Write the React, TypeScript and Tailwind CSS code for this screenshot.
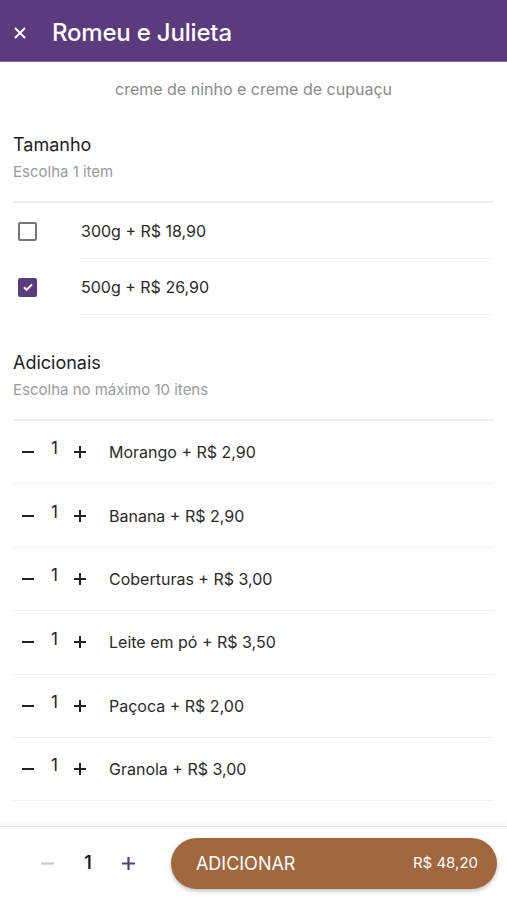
import React from "react";

const sizes = [
  { label: "300g + R$ 18,90", checked: false },
  { label: "500g + R$ 26,90", checked: true },
];

const extras = [
  "Morango + R$ 2,90",
  "Banana + R$ 2,90",
  "Coberturas + R$ 3,00",
  "Leite em pó + R$ 3,50",
  "Paçoca + R$ 2,00",
  "Granola + R$ 3,00",
];

const Minus = ({ className, size = 14 }: { className?: string; size?: number }) => (
  <svg width={size} height={size} viewBox="0 0 14 14" className={className}>
    <path d="M1 7h12" stroke="currentColor" strokeWidth="2" />
  </svg>
);

const Plus = ({ className, size = 14 }: { className?: string; size?: number }) => (
  <svg width={size} height={size} viewBox="0 0 14 14" className={className}>
    <path d="M1 7h12M7 1v12" stroke="currentColor" strokeWidth="2" />
  </svg>
);

const Checkbox = ({ checked }: { checked: boolean }) =>
  checked ? (
    <div className="w-[19px] h-[19px] rounded-[2px] bg-[#5b3a80] flex items-center justify-center">
      <svg width="12" height="12" viewBox="0 0 12 12">
        <path d="M2 6.3l2.6 2.5L10 3.4" stroke="#fff" strokeWidth="2" fill="none" />
      </svg>
    </div>
  ) : (
    <div className="w-[19px] h-[19px] rounded-[2px] border-2 border-[#767676]" />
  );

const App = () => {
  return (
    <div
      className="h-[900px] w-full flex flex-col bg-white overflow-hidden"
      style={{ fontFamily: "Inter, 'Noto Sans', sans-serif" }}
    >
      <header className="h-[62px] shrink-0 bg-[#5b3b7e] flex items-center pt-[4px] border-b border-[#8a6aac]">
        <svg width="12" height="12" viewBox="0 0 12 12" className="ml-[14px]">
          <path d="M1 1l10 10M11 1L1 11" stroke="#fff" strokeWidth="1.8" />
        </svg>
        <h1 className="ml-[26px] text-[24px] font-medium text-white tracking-[-0.2px]">
          Romeu e Julieta
        </h1>
      </header>

      <main className="flex-1 overflow-hidden">
        <p className="pt-[17px] text-center text-[16px] leading-[20px] text-[#8a8a8a]">
          creme de ninho e creme de cupuaçu
        </p>

        <section className="mt-[34px] px-[13px]">
          <h2 className="text-[18px] leading-[24px] text-[#222]">Tamanho</h2>
          <p className="mt-[5px] text-[15px] leading-[20px] text-[#9a9a9a]">Escolha 1 item</p>
          <div className="mt-[19px] border-t-2 border-[#eeeeee]" />
          {sizes.map((s) => (
            <div key={s.label} className="h-[56px] flex items-center">
              <div className="w-[68px] pl-[5px] flex items-center">
                <Checkbox checked={s.checked} />
              </div>
              <div className="flex-1 h-full flex items-center border-b border-[#f0f0f0] mr-[3px]">
                <span className="text-[16px] text-[#2a2a2a]">{s.label}</span>
              </div>
            </div>
          ))}
        </section>

        <section className="mt-[36px] px-[13px]">
          <h2 className="text-[18px] leading-[24px] text-[#222]">Adicionais</h2>
          <p className="mt-[5px] text-[15px] leading-[20px] text-[#9a9a9a]">
            Escolha no máximo 10 itens
          </p>
          <div className="mt-[19px] border-t-2 border-[#eeeeee]" />
          {extras.map((e) => (
            <div key={e} className="h-[63.4px] flex items-center border-b border-[#f2f2f2]">
              <Minus className="ml-[8px] text-[#222]" />
              <span className="ml-[16px] w-[12px] -mt-[6px] text-[17px] text-[#222]">1</span>
              <Plus className="ml-[10px] text-[#222]" />
              <span className="ml-[22px] text-[16px] text-[#2a2a2a]">{e}</span>
            </div>
          ))}
        </section>
      </main>

      <footer className="h-[74px] shrink-0 bg-white border-t border-[#e6e6e6] shadow-[0_-2px_6px_rgba(0,0,0,0.05)] flex items-center pl-[40px] pr-[10px]">
        <Minus size={15} className="text-[#c8c8cc]" />
        <span className="ml-[29px] text-[19px] font-medium text-[#111]">1</span>
        <Plus size={15} className="ml-[29px] text-[#5b3b7e]" />
        <button className="ml-[35px] flex-1 h-[51px] rounded-full bg-[#a1673f] shadow-[0_2px_4px_rgba(0,0,0,0.25)] flex items-center justify-between pl-[25px] pr-[19px]">
          <span className="text-[18px] text-white">ADICIONAR</span>
          <span className="text-[15px] text-white">R$ 48,20</span>
        </button>
      </footer>
    </div>
  );
};

export default App;
